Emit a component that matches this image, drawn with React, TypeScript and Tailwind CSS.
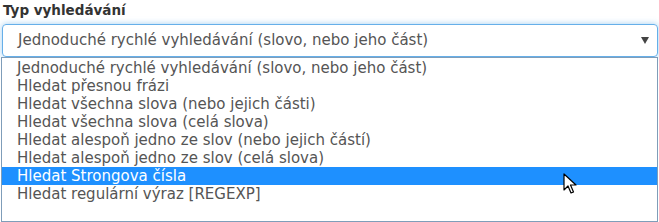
import React from "react";

const items = [
  "Jednoduché rychlé vyhledávání (slovo, nebo jeho část)",
  "Hledat přesnou frázi",
  "Hledat všechna slova (nebo jejich části)",
  "Hledat všechna slova (celá slova)",
  "Hledat alespoň jedno ze slov (nebo jejich částí)",
  "Hledat alespoň jedno ze slov (celá slova)",
  "Hledat Strongova čísla",
  "Hledat regulární výraz [REGEXP]",
];

export default function App() {
  return (
    <div className="w-[659px] h-[222px] overflow-hidden bg-white relative font-['DejaVu_Sans',sans-serif]">
      <div className="pl-[3px] pt-[2px] h-[24px] text-[13.5px] leading-[17px] font-bold text-[#333]">
        Typ vyhledávání
      </div>
      <div className="ml-[2px] w-[656px] h-[33px] border border-[#66afe9] rounded-[4px] shadow-[0_0_6px_rgba(102,175,233,0.6)] flex items-center pl-[15px] pr-[10px] text-[15px] text-[#555]">
        <span className="flex-1">{items[0]}</span>
        <svg width="8" height="7" viewBox="0 0 8 7" className="mr-[-2px]">
          <path d="M0 0 H8 L4 7 Z" fill="#444" />
        </svg>
      </div>
      <div className="ml-[1px] w-[657px] h-[165px] border border-[#7f9db9] bg-white pt-[1px] text-[15px] text-[#555]">
        {items.map((t, i) => (
          <div
            key={i}
            className={
              "h-[18px] leading-[18px] pl-[15px] " +
              (i === 6 ? "bg-[#1e90ff] text-white" : "")
            }
          >
            {t}
          </div>
        ))}
      </div>
      <svg
        className="absolute left-[563px] top-[173px]"
        width="14"
        height="22"
        viewBox="0 0 14 22"
      >
        <path
          d="M1 1 L1 17 L5 13 L8 20 L10.5 19 L7.5 12 L13 12 Z"
          fill="white"
          stroke="black"
          strokeWidth="1.2"
          strokeLinejoin="round"
        />
      </svg>
    </div>
  );
}
